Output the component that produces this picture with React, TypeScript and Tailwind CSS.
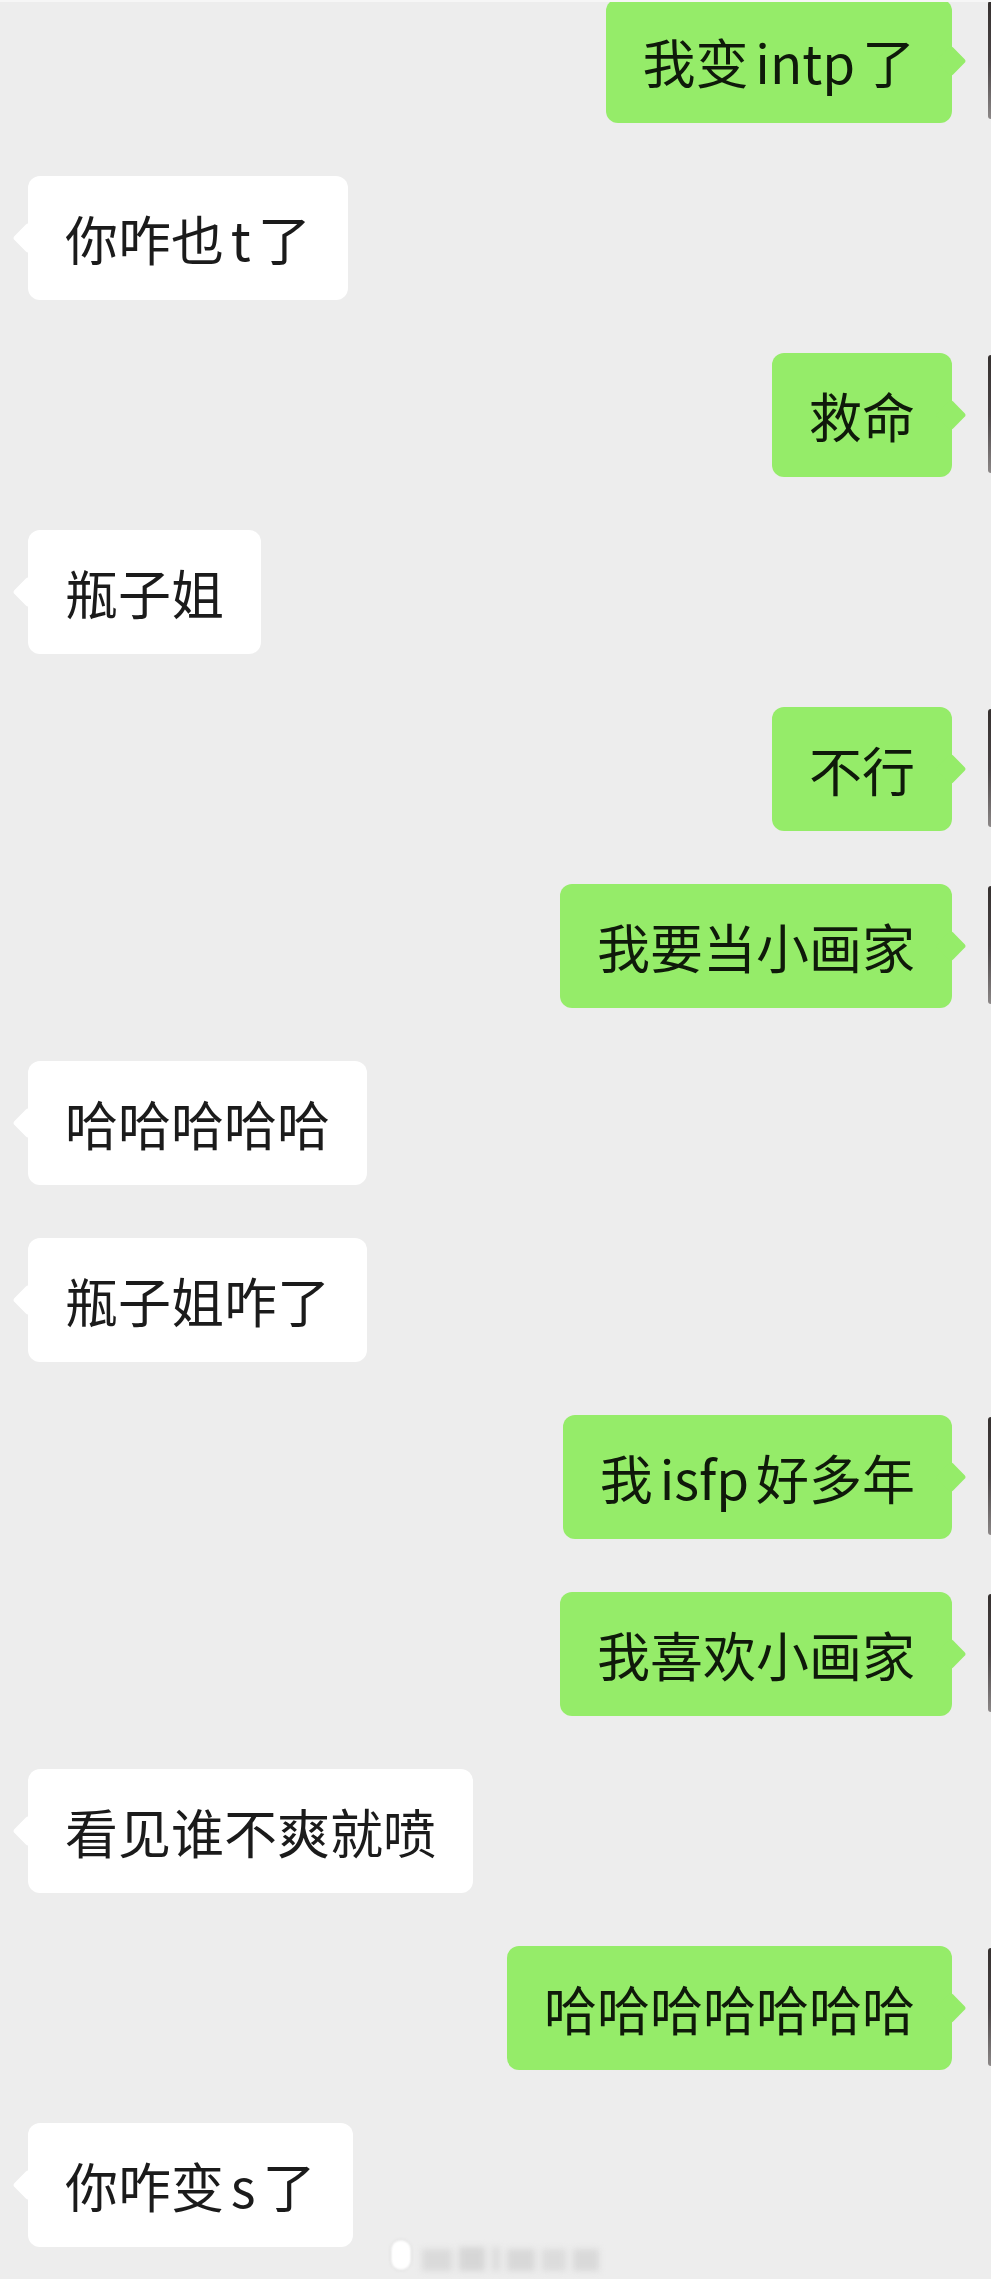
import * as React from 'react';

type Msg = { side: 'left' | 'right'; text: string };

const messages: Msg[] = [
  { side: 'right', text: '我变 intp 了' },
  { side: 'left', text: '你咋也 t 了' },
  { side: 'right', text: '救命' },
  { side: 'left', text: '瓶子姐' },
  { side: 'right', text: '不行' },
  { side: 'right', text: '我要当小画家' },
  { side: 'left', text: '哈哈哈哈哈' },
  { side: 'left', text: '瓶子姐咋了' },
  { side: 'right', text: '我 isfp 好多年' },
  { side: 'right', text: '我喜欢小画家' },
  { side: 'left', text: '看见谁不爽就喷' },
  { side: 'right', text: '哈哈哈哈哈哈哈' },
  { side: 'left', text: '你咋变 s 了' },
];

const Bubble: React.FC<{ msg: Msg }> = ({ msg }) => {
  const mine = msg.side === 'right';
  return (
    <div
      className={`relative h-[124px] flex items-center px-[37px] rounded-[12px] whitespace-pre text-[53px] leading-none [word-spacing:-5px] ${
        mine ? 'bg-[#95ec69] text-[#0f1a0a]' : 'bg-white text-[#1b1b1b]'
      }`}
    >
      <span
        className={`absolute top-1/2 -translate-y-1/2 w-[22px] h-[22px] rotate-45 rounded-[3px] ${
          mine ? 'bg-[#95ec69] -right-[10px]' : 'bg-white -left-[11px]'
        }`}
      />
      <span className="relative">{msg.text}</span>
    </div>
  );
};

export default function App() {
  return (
    <div
      className="min-h-[2279px] w-[991px] overflow-hidden bg-[#ededed] border-t-2 border-[#f6f6f6]"
      style={{ fontFamily: '"Noto Sans CJK SC", "Noto Sans", sans-serif' }}
    >
      <div className="flex flex-col gap-[53px] -mt-[3px]">
        {messages.map((m, i) =>
          m.side === 'right' ? (
            <div key={i} className="flex justify-end items-start">
              <Bubble msg={m} />
              <div className="ml-[36px] w-[3px] h-[118px] mt-[2px] overflow-hidden rounded-l-[4px] bg-gradient-to-b from-[#35302f] via-[#4a4445] to-[#8c8888]" />
            </div>
          ) : (
            <div key={i} className="flex pl-[28px]">
              <Bubble msg={m} />
            </div>
          )
        )}
      </div>

      {/* blurred watermark */}
      <div className="flex items-end gap-[10px] pl-[390px] mt-[-10px] h-[34px]">
        <div className="w-[22px] h-[32px] rounded-full bg-white border border-[#d6d6d6] blur-[1px]" />
        <div className="flex items-end gap-[7px] blur-[3px]">
          <div className="w-[30px] h-[22px] bg-[#dadada]" />
          <div className="w-[26px] h-[24px] bg-[#d6d6d6]" />
          <div className="w-[8px] h-[24px] bg-[#dcdcdc]" />
          <div className="w-[28px] h-[22px] bg-[#d8d8d8]" />
          <div className="w-[24px] h-[22px] bg-[#dcdcdc]" />
          <div className="w-[26px] h-[22px] bg-[#d9d9d9]" />
        </div>
      </div>
    </div>
  );
}
